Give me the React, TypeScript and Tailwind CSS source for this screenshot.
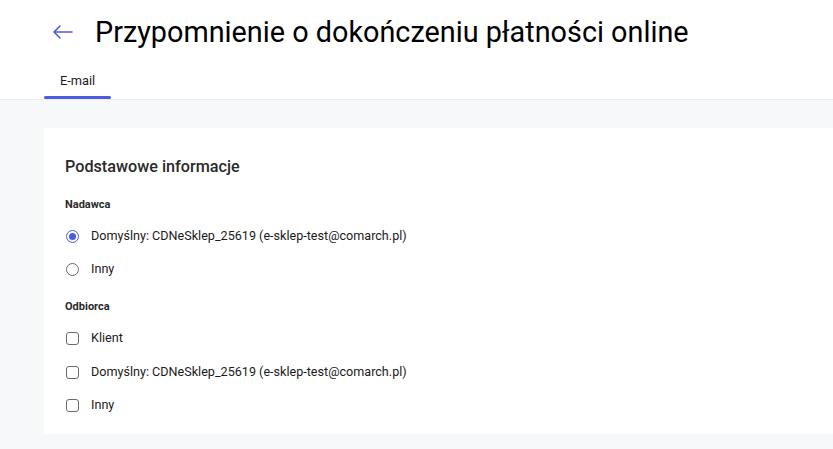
export default function App() {
  return (
    <div className="min-h-screen bg-[#f7f8fa] font-['Roboto',sans-serif] text-[#1b1b1b]">
      <div className="bg-white border-b border-[#ececef]">
        <div className="flex items-center h-[64px] pl-[52px]">
          <svg width="22" height="14" viewBox="0 0 22 14" fill="none" stroke="#4f5bdf" strokeWidth="1.6" strokeLinecap="round" strokeLinejoin="round">
            <path d="M20 7H2M8 1L2 7l6 6" />
          </svg>
          <h1 className="ml-[21px] text-[28.8px] leading-none text-black">Przypomnienie o dokończeniu płatności online</h1>
        </div>
        <div className="pl-[44px] flex">
          <div className="flex flex-col items-center w-[67px]">
            <span className="text-[12.8px] leading-none pt-[11px] pb-[8px] text-[#1b1b1b]">E-mail</span>
            <div className="h-[3px] w-full rounded-full bg-[#4c5be0]" />
          </div>
        </div>
      </div>
      <div className="pt-[28px] pl-[44px]">
        <div className="bg-white h-[306px] pl-[21px] pt-[29px]">
          <h2 className="text-[16.2px] font-medium leading-[20px] text-[#2a2a2a]">Podstawowe informacje</h2>
          <div className="mt-[21px] text-[11px] font-bold leading-[14px] text-[#2a2a2a]">Nadawca</div>
          <div className="mt-[15px] flex flex-col gap-[13px]">
            <label className="flex items-center h-[20px] text-[12.6px]">
              <span className="w-[13px] h-[13px] ml-[1px] rounded-full border border-[#4c5be0] flex items-center justify-center">
                <span className="w-[7px] h-[7px] rounded-full bg-[#4c5be0]" />
              </span>
              <span className="ml-[12px]">Domyślny: CDNeSklep_25619 (e-sklep-test@comarch.pl)</span>
            </label>
            <label className="flex items-center h-[20px] text-[12.6px]">
              <span className="w-[13px] h-[13px] ml-[1px] rounded-full border border-[#6b6b6b]" />
              <span className="ml-[12px]">Inny</span>
            </label>
          </div>
          <div className="mt-[20px] text-[11px] font-bold leading-[14px] text-[#2a2a2a]">Odbiorca</div>
          <div className="mt-[15px] flex flex-col gap-[13.5px]">
            {["Klient", "Domyślny: CDNeSklep_25619 (e-sklep-test@comarch.pl)", "Inny"].map((t) => (
              <label key={t} className="flex items-center h-[20px] text-[12.6px]">
                <span className="w-[13px] h-[13px] ml-[1px] rounded-[3px] border border-[#6b6b6b]" />
                <span className="ml-[12px]">{t}</span>
              </label>
            ))}
          </div>
        </div>
      </div>
    </div>
  )
}
